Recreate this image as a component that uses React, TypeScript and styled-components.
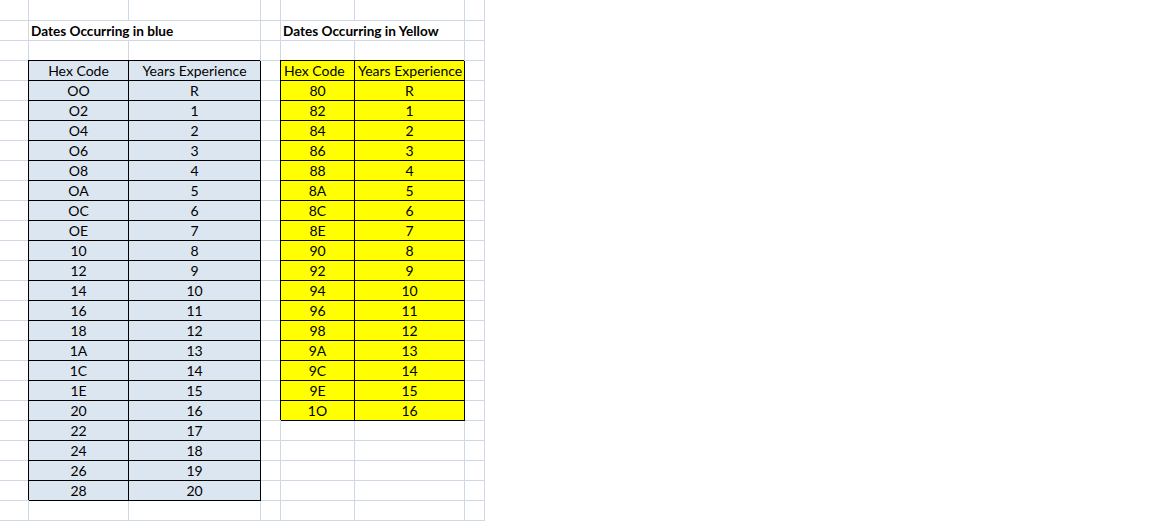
import React from 'react';
import styled, { createGlobalStyle } from 'styled-components';

const GlobalStyle = createGlobalStyle`
  html, body {
    margin: 0;
    padding: 0;
    background: #ffffff;
  }
  body {
    font-family: Lato, "Liberation Sans", Arial, sans-serif;
  }
`;

const GRID_LINE = '#d0d7e5';

const Sheet = styled.div`
  display: grid;
  grid-template-columns: 29px 100px 132px 20px 74px 110px 20px;
  grid-template-rows: 21px repeat(25, 20px);
  width: 485px;
`;

type Fill = 'blue' | 'yellow';

const Cell = styled.div<{ $fill?: Fill; $align?: 'left' | 'center'; $span?: number }>`
  box-sizing: border-box;
  grid-column: span ${p => p.$span || 1};
  border-right: 1px solid ${p => (p.$fill ? '#000' : GRID_LINE)};
  border-bottom: 1px solid ${p => (p.$fill ? '#000' : GRID_LINE)};
  box-shadow: ${p => (p.$fill ? '-1px -1px 0 #000' : 'none')};
  background: ${p => (p.$fill === 'blue' ? '#dce6f1' : p.$fill === 'yellow' ? '#ffff00' : '#ffffff')};
  color: #000;
  font-size: 14px;
  line-height: 20px;
  text-align: ${p => p.$align || 'center'};
  padding: 0 3px;
  white-space: nowrap;
  overflow: visible;
`;

const TitleCell = styled(Cell)`
  font-weight: 700;
  font-size: 13.6px;
  padding-left: 2px;
`;

const blueRows = [
  ['OO', 'R'], ['O2', '1'], ['O4', '2'], ['O6', '3'], ['O8', '4'], ['OA', '5'], ['OC', '6'],
  ['OE', '7'], ['10', '8'], ['12', '9'], ['14', '10'], ['16', '11'], ['18', '12'], ['1A', '13'],
  ['1C', '14'], ['1E', '15'], ['20', '16'], ['22', '17'], ['24', '18'], ['26', '19'], ['28', '20'],
];

const yellowRows = [
  ['80', 'R'], ['82', '1'], ['84', '2'], ['86', '3'], ['88', '4'], ['8A', '5'], ['8C', '6'],
  ['8E', '7'], ['90', '8'], ['92', '9'], ['94', '10'], ['96', '11'], ['98', '12'], ['9A', '13'],
  ['9C', '14'], ['9E', '15'], ['1O', '16'],
];

const TOTAL_ROWS = 26;

const App: React.FC = () => {
  const cells: React.ReactNode[] = [];

  for (let r = 0; r < TOTAL_ROWS; r++) {
    const key = (c: number) => `${r}-${c}`;

    // column A
    cells.push(<Cell key={key(0)} />);

    // blue table (B, C)
    if (r === 1) {
      cells.push(
        <TitleCell key={key(1)} $span={2} $align="left">
          Dates Occurring in blue
        </TitleCell>
      );
    } else if (r === 3) {
      cells.push(<Cell key={key(1)} $fill="blue">Hex Code</Cell>);
      cells.push(<Cell key={key(2)} $fill="blue">Years Experience</Cell>);
    } else if (r >= 4 && r - 4 < blueRows.length) {
      const [hex, yrs] = blueRows[r - 4];
      cells.push(<Cell key={key(1)} $fill="blue">{hex}</Cell>);
      cells.push(<Cell key={key(2)} $fill="blue">{yrs}</Cell>);
    } else {
      cells.push(<Cell key={key(1)} />);
      cells.push(<Cell key={key(2)} />);
    }

    // column D
    cells.push(<Cell key={key(3)} />);

    // yellow table (E, F)
    if (r === 1) {
      cells.push(
        <TitleCell key={key(4)} $span={2} $align="left">
          Dates Occurring in Yellow
        </TitleCell>
      );
    } else if (r === 3) {
      cells.push(<Cell key={key(4)} $fill="yellow" $align="left">Hex Code</Cell>);
      cells.push(<Cell key={key(5)} $fill="yellow" $align="left">Years Experience</Cell>);
    } else if (r >= 4 && r - 4 < yellowRows.length) {
      const [hex, yrs] = yellowRows[r - 4];
      cells.push(<Cell key={key(4)} $fill="yellow">{hex}</Cell>);
      cells.push(<Cell key={key(5)} $fill="yellow">{yrs}</Cell>);
    } else {
      cells.push(<Cell key={key(4)} />);
      cells.push(<Cell key={key(5)} />);
    }

    // column G
    cells.push(<Cell key={key(6)} />);
  }

  return (
    <>
      <GlobalStyle />
      <Sheet>{cells}</Sheet>
    </>
  );
};

export default App;
